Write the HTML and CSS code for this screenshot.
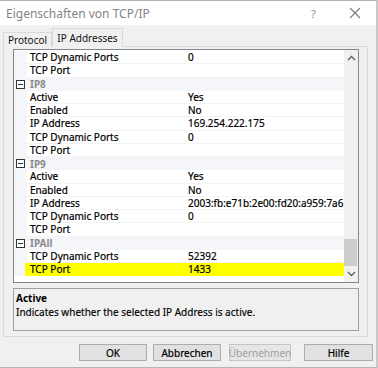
FILE: index.html
```html
<!DOCTYPE html>
<html>
<head>
<meta charset="utf-8">
<link rel="stylesheet" href="styles.css">
</head>
<body>
<div class="dialog">
  <div class="titlebar">
    <span class="title">Eigenschaften von TCP/IP</span>
    <span class="help">?</span>
    <span class="close">
      <svg width="12" height="12" viewBox="0 0 12 12"><path d="M1 1 L11 11 M11 1 L1 11" stroke="#7a7a7a" stroke-width="1.1" fill="none"/></svg>
    </span>
  </div>
  <div class="body">
    <div class="tabs">
      <div class="tab">Protocol</div>
      <div class="tab active">IP Addresses</div>
    </div>
    <div class="panel">
      <div class="grid">
        <div class="rows">
          <div class="row"><span class="gut"></span><span class="name">TCP Dynamic Ports</span><span class="val">0</span></div>
          <div class="row"><span class="gut"></span><span class="name">TCP Port</span><span class="val"></span></div>
          <div class="row cat"><span class="gut"><span class="minus"></span></span><span class="catname">IP8</span></div>
          <div class="row"><span class="gut"></span><span class="name">Active</span><span class="val">Yes</span></div>
          <div class="row"><span class="gut"></span><span class="name">Enabled</span><span class="val">No</span></div>
          <div class="row"><span class="gut"></span><span class="name">IP Address</span><span class="val">169.254.222.175</span></div>
          <div class="row"><span class="gut"></span><span class="name">TCP Dynamic Ports</span><span class="val">0</span></div>
          <div class="row"><span class="gut"></span><span class="name">TCP Port</span><span class="val"></span></div>
          <div class="row cat"><span class="gut"><span class="minus"></span></span><span class="catname">IP9</span></div>
          <div class="row"><span class="gut"></span><span class="name">Active</span><span class="val">Yes</span></div>
          <div class="row"><span class="gut"></span><span class="name">Enabled</span><span class="val">No</span></div>
          <div class="row"><span class="gut"></span><span class="name">IP Address</span><span class="val clip">2003:fb:e71b:2e00:fd20:a959:7a6</span></div>
          <div class="row"><span class="gut"></span><span class="name">TCP Dynamic Ports</span><span class="val">0</span></div>
          <div class="row"><span class="gut"></span><span class="name">TCP Port</span><span class="val"></span></div>
          <div class="row cat"><span class="gut"><span class="minus"></span></span><span class="catname">IPAll</span></div>
          <div class="row"><span class="gut"></span><span class="name">TCP Dynamic Ports</span><span class="val">52392</span></div>
          <div class="row hl"><span class="gut"></span><span class="name">TCP Port</span><span class="val">1433</span></div>
        </div>
        <div class="scrollbar">
          <div class="arrow up"><svg width="9" height="6" viewBox="0 0 9 6"><path d="M1 5 L4.5 1.5 L8 5" stroke="#606060" stroke-width="1.4" fill="none"/></svg></div>
          <div class="track"><div class="thumb"></div></div>
          <div class="arrow down"><svg width="9" height="6" viewBox="0 0 9 6"><path d="M1 1 L4.5 4.5 L8 1" stroke="#606060" stroke-width="1.4" fill="none"/></svg></div>
        </div>
      </div>
      <div class="desc">
        <div class="desc-title">Active</div>
        <div class="desc-text">Indicates whether the selected IP Address is active.</div>
      </div>
    </div>
    <div class="buttons">
      <div class="btn ok">OK</div>
      <div class="btn cancel">Abbrechen</div>
      <div class="btn apply disabled">Übernehmen</div>
      <div class="btn help-btn">Hilfe</div>
    </div>
  </div>
</div>
</body>
</html>
```
FILE: styles.css
```css
* { box-sizing: border-box; }
html, body { margin: 0; padding: 0; background: #f0f0f0; }
body { font-family: "Noto Sans", "Open Sans", sans-serif; font-size: 10px; color: #000; }

.dialog {
  width: 378px; height: 368px;
  background: #f0f0f0;
  border-top: 1px solid #b4b4b4;
  border-right: 2px solid #c8c8c8;
  border-bottom: 1px solid #b4b4b4;
  display: flex; flex-direction: column;
  overflow: hidden;
}

.titlebar {
  height: 24px; background: #fff;
  display: flex; align-items: center;
  flex: none;
}
.title { color: #858585; font-size: 12px; margin-left: 6px; flex: 1; white-space: nowrap; }
.help { color: #909090; font-size: 11px; width: 12px; margin-right: 26px; }
.close { width: 12px; height: 12px; margin-right: 15px; display: flex; }

.body { flex: 1; display: flex; flex-direction: column; padding: 4px 0 0 3px; }

.tabs { display: flex; align-items: flex-end; height: 18px; margin-bottom: -1px; position: relative; z-index: 1; }
.tab {
  height: 15px; width: 49px;
  border: 1px solid #d9d9d9; border-bottom: none;
  background: #f0f0f0;
  display: flex; align-items: center; justify-content: center;
  color: #111; white-space: nowrap;
}
.tab.active {
  height: 19px; width: 71px; background: #f0f0f0;
  border-bottom: 1px solid #f0f0f0;
}

.panel {
  width: 365px; height: 291px;
  border: 1px solid #d9d9d9;
  background: #f0f0f0;
  padding: 2px 8px 5px 9px;
  display: flex; flex-direction: column;
}

.grid {
  height: 234px;
  border: 1px solid #828790;
  background: #fff;
  display: flex;
}
.rows { flex: 1; padding-top: 1px; overflow: hidden; }
.row {
  height: 13.25px; line-height: 12px; display: flex; align-items: center;
  white-space: nowrap;
}
.gut { width: 13px; height: 100%; background: #f4f6fa; flex: none; display: flex; align-items: center; justify-content: center; }
.name { width: 159px; height: 100%; padding-left: 3px; display: flex; align-items: center; border-bottom: 1px solid #f3f3f3; flex: none; -webkit-text-stroke: 0.2px #000; }
.val { flex: 1; height: 100%; padding-left: 2px; display: flex; align-items: center; border-bottom: 1px solid #f3f3f3; overflow: hidden; -webkit-text-stroke: 0.2px #000; }
.cat { background: #f4f6fa; }
.catname { color: #8c8c8c; font-weight: bold; padding-left: 3px; }
.minus {
  width: 9px; height: 9px; border: 1px solid #333; position: relative; background: #fff;
}
.minus::after {
  content: ""; position: absolute; left: 1px; right: 1px; top: 3px; height: 1px; background: #333;
}
.hl .name, .hl .val { background: #ffff00; border-bottom-color: #ffff00; }
.hl .gut { background: linear-gradient(to right, #f4f6fa 0 11px, #ffff00 11px); }

.scrollbar { width: 14px; background: #f0f0f0; display: flex; flex-direction: column; flex: none; }
.arrow { height: 16px; display: flex; align-items: center; justify-content: center; flex: none; }
.track { flex: 1; display: flex; flex-direction: column; justify-content: flex-end; }
.thumb { height: 27px; background: #cdcdcd; margin: 0 1px 0 0; }

.desc {
  margin-top: 5px; height: 43px;
  border: 1px solid #a0a0a0;
  background: #f0f0f0;
  padding: 2px 0 0 2px;
}
.desc-title { font-weight: bold; line-height: 14px; }
.desc-text { line-height: 15px; -webkit-text-stroke: 0.15px #000; }

.buttons { display: flex; padding-top: 7px; padding-left: 76px; }
.btn {
  height: 17px;
  border: 1px solid #adadad;
  background: #e1e1e1;
  display: flex; align-items: center; justify-content: center;
  white-space: nowrap;
  -webkit-text-stroke: 0.2px #000;
}
.ok { width: 68px; }
.cancel { width: 68px; margin-left: 6px; }
.apply { width: 62px; margin-left: 8px; }
.help-btn { width: 69px; margin-left: 13px; }
.disabled { color: #a0a0a0; border-color: #c4c4c4; background: #e6e6e6; -webkit-text-stroke: 0; }
```
